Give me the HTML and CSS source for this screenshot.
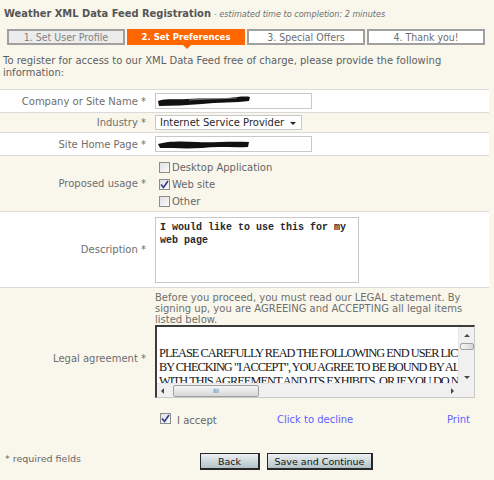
FILE: index.html
```html
<!DOCTYPE html>
<html lang="en">
<head>
    <title>Weather XML Data Feed Registration</title>
    <link rel="stylesheet" href="styles.css">
</head>
<body>

    <div class="header">
      <span class="title">Weather XML Data Feed Registration</span>
      <span class="subtitle">- estimated time to completion: 2 minutes</span>
    </div>

    <div class="tabs">
      <div class="tab tab-done">1. Set User Profile</div>
      <div class="tab tab-active">2. Set Preferences</div>
      <div class="tab">3. Special Offers</div>
      <div class="tab">4. Thank you!</div>
    </div>

    <p class="intro">
      To register for access to our XML Data Feed free of charge, please provide the following information:
    </p>

    <div class="form">
      <div class="row row-white row-company">
        <div class="label">Company or Site Name *</div>
        <div class="field">
          <div class="text-input">
            <svg class="scribble" width="94" height="12" viewBox="0 0 94 12">
              <path d="M1 6 C 10 3, 20 5, 30 4 C 45 3, 60 4, 72 3 C 80 2, 88 1, 93 2 L 92 6 C 80 8, 60 7, 45 9 C 30 10, 15 11, 2 11 Z" fill="#111"/>
              <path d="M32 5 C 45 4, 60 4, 80 3" stroke="#888" stroke-width="0.8" fill="none"/>
            </svg>
          </div>
        </div>
      </div>

      <div class="row row-industry">
        <div class="label">Industry *</div>
        <div class="field">
          <div class="select">
            Internet Service Provider
            <span class="select-arrow"></span>
          </div>
        </div>
      </div>

      <div class="row row-white row-site">
        <div class="label">Site Home Page *</div>
        <div class="field">
          <div class="text-input">
            <svg class="scribble" width="94" height="12" viewBox="0 0 94 12">
              <path d="M1 6 C 10 3, 25 3, 40 4 C 55 5, 70 3, 92 4 L 91 9 C 75 10, 60 8, 45 10 C 30 11, 15 10, 3 10 Z" fill="#111"/>
            </svg>
          </div>
        </div>
      </div>

      <div class="row row-usage">
        <div class="label">Proposed usage *</div>
        <div class="field">
          <div class="check-list">
            <div class="check-item"><span class="checkbox"></span>Desktop Application</div>
            <div class="check-item">
              <span class="checkbox">
                <svg width="9" height="9" viewBox="0 0 9 9"><path d="M1 4.5 L3.5 7.5 L8 1" stroke="#2b3c8f" stroke-width="1.6" fill="none"/></svg>
              </span>Web site
            </div>
            <div class="check-item"><span class="checkbox"></span>Other</div>
          </div>
        </div>
      </div>

      <div class="row row-white row-description">
        <div class="label">Description *</div>
        <div class="field">
          <div class="textarea">I would like to use this for my web page</div>
        </div>
      </div>

      <div class="row row-legal">
        <div class="label">Legal agreement *</div>
        <div class="field">
          <p class="legal-note">Before you proceed, you must read our LEGAL statement. By signing up, you are AGREEING and ACCEPTING all legal items listed below.</p>

          <div class="legal-box">
            <div class="legal-text">
              <p class="legal-blank"></p>
              <p>PLEASE CAREFULLY READ THE FOLLOWING END USER LICENSE</p>
              <p>BY CHECKING "I ACCEPT", YOU AGREE TO BE BOUND BY ALL</p>
              <p>WITH THIS AGREEMENT AND ITS EXHIBITS, OR IF YOU DO NOT</p>
            </div>
            <div class="scroll-v">
              <span class="arrow-up"></span>
              <span class="thumb-v"></span>
              <span class="arrow-down"></span>
            </div>
            <div class="scroll-h">
              <span class="arrow-left"></span>
              <span class="thumb-h">III</span>
              <span class="arrow-right"></span>
            </div>
            <div class="scroll-corner"></div>
          </div>

          <div class="accept-line">
            <div class="accept">
              <span class="checkbox">
                <svg width="9" height="9" viewBox="0 0 9 9"><path d="M1 4.5 L3.5 7.5 L8 1" stroke="#2b3c8f" stroke-width="1.6" fill="none"/></svg>
              </span>
              <span class="accept-text">I accept</span>
            </div>
            <a class="link">Click to decline</a>
            <a class="link print-link">Print</a>
          </div>
        </div>
      </div>
    </div>

    <div class="footer">
      <div class="required-note">* required fields</div>
      <div class="buttons">
        <button class="form-button back-button">Back</button>
        <button class="form-button save-button">Save and Continue</button>
      </div>
    </div>

</body>
</html>
```

FILE: styles.css
```css
body {
  margin: 0;
  background-color: rgb(249, 247, 236);
  color: rgb(102, 102, 102);
  font-family: "DejaVu Sans", Verdana, sans-serif;
  font-size: 10px;
  width: 494px;
  height: 480px;
  overflow: hidden;
}

.header {
  padding: 7px 0 0 4px;
  height: 15px;
  white-space: nowrap;
  font-family: "DejaVu Sans Condensed", "DejaVu Sans", sans-serif;
  font-stretch: condensed;
}

.title {
  font-size: 11px;
  font-weight: bold;
  color: rgb(85, 85, 85);
}

.subtitle {
  font-size: 9px;
  font-style: italic;
  color: rgb(110, 110, 110);
}

.tabs {
  display: flex;
  gap: 2px;
  margin: 7px 0 0 7px;
  font-family: "DejaVu Sans Condensed", "DejaVu Sans", sans-serif;
  font-stretch: condensed;
}

.tab {
  position: relative;
  width: 114px;
  height: 12px;
  line-height: 12px;
  border: 2px solid rgb(160, 160, 160);
  background-color: white;
  text-align: center;
  font-size: 10.5px;
  color: rgb(110, 110, 110);
}

.tab-done {
  background-color: rgb(236, 236, 236);
  color: rgb(130, 130, 130);
}

.tab-active {
  background-color: rgb(255, 102, 0);
  border-color: rgb(255, 102, 0);
  color: white;
  font-size: 9.5px;
  font-weight: bold;
}

/* little pointer under the active step */
.tab-active::after {
  content: "";
  position: absolute;
  left: 54px;
  bottom: -6px;
  border-left: 4px solid transparent;
  border-right: 4px solid transparent;
  border-top: 4px solid rgb(255, 102, 0);
}

.intro {
  margin: 10px 0 0 3px;
  width: 460px;
  line-height: 12px;
  color: rgb(95, 95, 95);
}

.form {
  margin-top: 10px;
  width: 489px;
  border-top: 1px solid rgb(218, 218, 218);
}

.row {
  display: flex;
  align-items: center;
  border-bottom: 1px solid rgb(218, 218, 218);
}

.row-white {
  background-color: white;
}

.row-company { height: 22px; }
.row-industry { height: 19px; }
.row-site { height: 22px; }
.row-usage { height: 55px; }
.row-description { height: 75px; }

.row-legal {
  border-bottom: none;
  align-items: flex-start;
}

.row-legal .label {
  margin-top: 65px;
}

.label {
  width: 146px;
  text-align: right;
  color: rgb(110, 110, 110);
  white-space: nowrap;
}

.field {
  margin-left: 9px;
}

.text-input {
  width: 155px;
  height: 14px;
  border: 1px solid rgb(200, 200, 200);
  background-color: white;
  display: flex;
  align-items: center;
}

.scribble {
  margin-left: 1px;
}

.select {
  position: relative;
  width: 141px;
  height: 13px;
  line-height: 13px;
  padding-left: 4px;
  border: 1px solid rgb(200, 200, 200);
  background-color: white;
  color: rgb(40, 40, 40);
  white-space: nowrap;
}

.select-arrow {
  position: absolute;
  right: 5px;
  top: 6px;
  border-left: 3px solid transparent;
  border-right: 3px solid transparent;
  border-top: 3px solid rgb(40, 40, 40);
}

.check-list {
  display: flex;
  flex-direction: column;
  gap: 6px;
  margin: 2px 0 0 4px;
}

.check-item {
  display: flex;
  align-items: center;
  gap: 2px;
  height: 11px;
}

.checkbox {
  width: 9px;
  height: 9px;
  border: 1px solid rgb(140, 140, 140);
  background: linear-gradient(to bottom right, rgb(225, 225, 225), rgb(250, 250, 250));
  display: flex;
  align-items: center;
  justify-content: center;
}

.textarea {
  width: 194px;
  height: 58px;
  padding: 3px 4px;
  border: 1px solid rgb(200, 200, 200);
  background-color: white;
  font-family: "Liberation Mono", "Courier New", monospace;
  font-size: 10px;
  font-weight: bold;
  line-height: 13px;
  color: rgb(40, 40, 40);
}

.legal-note {
  margin: 4px 0 0 0;
  width: 320px;
  line-height: 11px;
  color: rgb(110, 110, 110);
}

.legal-box {
  display: grid;
  grid-template-columns: 301px 16px;
  grid-template-rows: 56px 14px;
  width: 317px;
  border-top: 2px solid rgb(60, 60, 60);
  border-left: 2px solid rgb(60, 60, 60);
  border-right: 1px solid rgb(200, 200, 200);
  border-bottom: 1px solid rgb(200, 200, 200);
  background-color: white;
}

.legal-text {
  overflow: hidden;
  white-space: nowrap;
  padding-left: 2px;
  font-family: "Liberation Serif", "Times New Roman", serif;
  font-size: 12.3px;
  letter-spacing: -0.95px;
  color: rgb(20, 20, 20);
}

.legal-text p {
  margin: 0;
  line-height: 14px;
}

.legal-text .legal-blank {
  height: 19px;
}

.scroll-v {
  position: relative;
  background-color: rgb(240, 240, 240);
  border-left: 1px solid rgb(230, 230, 230);
}

.arrow-up {
  position: absolute;
  left: 5px;
  top: 7px;
  border-left: 3px solid transparent;
  border-right: 3px solid transparent;
  border-bottom: 3px solid rgb(70, 70, 70);
}

.thumb-v {
  position: absolute;
  left: 1px;
  top: 16px;
  width: 12px;
  height: 5px;
  border: 1px solid rgb(160, 160, 160);
  border-radius: 2px;
  background: linear-gradient(to right, rgb(245, 245, 245), rgb(215, 215, 215));
}

.arrow-down {
  position: absolute;
  left: 5px;
  bottom: 4px;
  border-left: 3px solid transparent;
  border-right: 3px solid transparent;
  border-top: 3px solid rgb(70, 70, 70);
}

.scroll-h {
  position: relative;
  background-color: rgb(240, 240, 240);
  border-top: 1px solid rgb(230, 230, 230);
}

.arrow-left {
  position: absolute;
  left: 4px;
  top: 4px;
  border-top: 3px solid transparent;
  border-bottom: 3px solid transparent;
  border-right: 3px solid rgb(70, 70, 70);
}

.thumb-h {
  position: absolute;
  left: 16px;
  top: 1px;
  width: 84px;
  height: 10px;
  border: 1px solid rgb(160, 160, 160);
  border-radius: 2px;
  background: linear-gradient(to bottom, rgb(245, 245, 245), rgb(215, 215, 215));
  font-size: 6px;
  line-height: 10px;
  text-align: center;
  color: rgb(90, 90, 90);
}

.arrow-right {
  position: absolute;
  right: 4px;
  top: 4px;
  border-top: 3px solid transparent;
  border-bottom: 3px solid transparent;
  border-left: 3px solid rgb(70, 70, 70);
}

.scroll-corner {
  background-color: rgb(240, 240, 240);
}

.accept-line {
  display: flex;
  align-items: flex-start;
  margin: 15px 0 0 5px;
  width: 310px;
  height: 14px;
}

.accept {
  display: flex;
  align-items: flex-start;
  gap: 6px;
  width: 117px;
}

.accept-text {
  margin-top: 2px;
}

.link {
  margin-top: 1px;
  color: rgb(95, 95, 255);
  cursor: pointer;
}

.print-link {
  margin-left: auto;
}

.footer {
  display: flex;
  align-items: flex-start;
  margin-top: 24px;
}

.required-note {
  width: 195px;
  padding: 2px 0 0 5px;
  font-size: 9.5px;
}

.buttons {
  display: flex;
  gap: 7px;
  margin-top: 2px;
}

.form-button {
  height: 17px;
  padding: 0;
  border: 1px solid rgb(40, 40, 40);
  border-right-width: 2px;
  border-bottom-width: 2px;
  background: linear-gradient(to bottom, rgb(235, 240, 242), rgb(180, 195, 200));
  font-family: "DejaVu Sans", Verdana, sans-serif;
  font-size: 9.5px;
  color: rgb(20, 20, 20);
  cursor: pointer;
}

.back-button {
  width: 60px;
}

.save-button {
  width: 106px;
}
```
